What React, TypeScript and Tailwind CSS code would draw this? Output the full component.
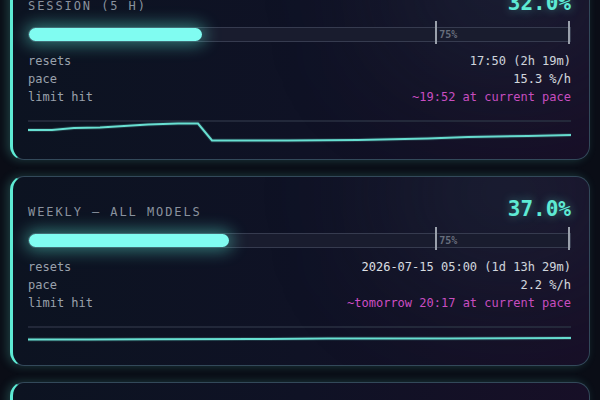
import React from 'react';

type Point = [number, number];

interface Meter {
  id: string;
  title: string;
  percent: number;
  resets: string;
  pace: string;
  limitHit: string;
  history: Point[];
}

const METERS: Meter[] = [
  {
    id: 'session',
    title: 'SESSION (5 H)',
    percent: 32.0,
    resets: '17:50 (2h 19m)',
    pace: '15.3 %/h',
    limitHit: '~19:52 at current pace',
    history: [
      [0, 10], [24, 10], [46, 8], [72, 7.5], [96, 6], [120, 4.5], [150, 3.5],
      [170, 3.5], [184, 20.5], [260, 20.5], [330, 20], [400, 18.5], [440, 17],
      [500, 16], [543, 15],
    ],
  },
  {
    id: 'weekly',
    title: 'WEEKLY — ALL MODELS',
    percent: 37.0,
    resets: '2026-07-15 05:00 (1d 13h 29m)',
    pace: '2.2 %/h',
    limitHit: '~tomorrow 20:17 at current pace',
    history: [
      [0, 13.5], [60, 13.5], [120, 13.2], [240, 13], [300, 12.6], [420, 12.4], [543, 12],
    ],
  },
];

const WARN_AT = 75;

const Sparkline: React.FC<{ points: Point[] }> = ({ points }) => {
  const d = points.map(([x, y], i) => `${i === 0 ? 'M' : 'L'}${x} ${y}`).join(' ');
  return (
    <svg width="543" height="24" viewBox="0 0 543 24" className="block overflow-visible">
      <line x1="0" y1="1" x2="543" y2="1" stroke="#2a3142" strokeWidth="1.5" />
      <path d={d} fill="none" stroke="#6fe3d4" strokeWidth="4" strokeOpacity="0.15" strokeLinejoin="round" />
      <path d={d} fill="none" stroke="#68e0d2" strokeWidth="2" strokeLinejoin="miter" />
    </svg>
  );
};

const CARD =
  'relative h-[190px] shrink-0 overflow-hidden rounded-[14px] border border-[#33495a] border-l-[3px] border-l-[#5eead4] bg-gradient-to-r from-[#0c1321] via-[#0f1225] to-[#170f27] pl-[15px] pr-[18px] pt-[20px] shadow-[-3px_0_10px_rgba(94,234,212,0.22)]';

const UsageCard: React.FC<{ meter: Meter }> = ({ meter }) => (
  <section className={CARD}>
    <div className="pointer-events-none absolute -right-10 -top-16 h-40 w-60 rounded-full bg-[#2b4a5c]/25 blur-3xl" />

    <div className="relative flex h-[26px] items-center justify-between">
      <h2 className="pt-1 text-[12px] tracking-[0.16em] text-[#8a929e]">{meter.title}</h2>
      <span className="text-[21px] font-bold text-[#5eead4] [text-shadow:0_0_10px_rgba(94,234,212,0.45)]">
        {meter.percent.toFixed(1)}%
      </span>
    </div>

    {/* usage bar with the warning marker and end tick */}
    <div className="relative mt-[4px] h-[23px]">
      <div className="absolute inset-x-0 top-[6px] h-[15px] rounded-r-[6px] rounded-l-full border border-[#363b4f] bg-[#191c2e]">
        <div
          className="h-full rounded-full bg-[#80fcf1] shadow-[0_0_16px_4px_rgba(94,234,212,0.45)]"
          style={{ width: `${meter.percent}%` }}
        />
      </div>
      <div
        className="absolute top-0 h-[23px] w-[2px] bg-[#9aa0ab]"
        style={{ left: `${WARN_AT}%` }}
      />
      <span
        className="absolute top-[7px] ml-[4px] text-[10px] font-bold leading-[13px] text-[#676d7c]"
        style={{ left: `${WARN_AT}%` }}
      >
        {WARN_AT}%
      </span>
      <div className="absolute right-[1px] top-0 h-[23px] w-[2px] bg-[#9aa0ab]" />
    </div>

    <dl className="mt-[8px] text-[12px] leading-[18px]">
      <div className="flex justify-between">
        <dt className="text-[#9aa1ac]">resets</dt>
        <dd className="text-[#e4e6ec]">{meter.resets}</dd>
      </div>
      <div className="flex justify-between">
        <dt className="text-[#9aa1ac]">pace</dt>
        <dd className="text-[#e4e6ec]">{meter.pace}</dd>
      </div>
      <div className="flex justify-between">
        <dt className="text-[#9aa1ac]">limit hit</dt>
        <dd className="text-[#d24ec6]">{meter.limitHit}</dd>
      </div>
    </dl>

    <div className="mt-[14px]">
      <Sparkline points={meter.history} />
    </div>
  </section>
);

export default function App() {
  return (
    <div className="h-[400px] w-[600px] overflow-hidden bg-[#0a0d16] font-['DejaVu_Sans_Mono',monospace]">
      <div className="-mt-[30px] flex flex-col gap-4 px-[10px]">
        {METERS.map((m) => (
          <UsageCard key={m.id} meter={m} />
        ))}
        {/* next meter, scrolled below the fold */}
        <section className={CARD} />
      </div>
    </div>
  );
}
